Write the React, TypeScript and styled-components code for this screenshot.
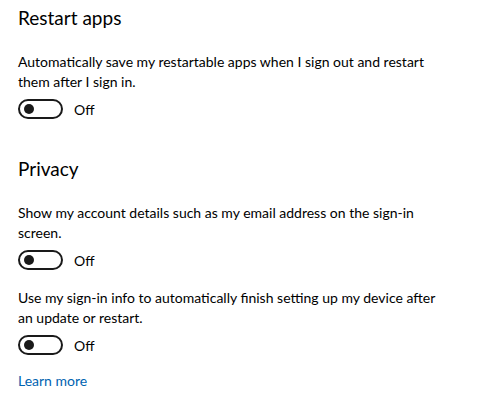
import * as React from "react"
import styled, { createGlobalStyle } from "styled-components"

const GlobalStyle = createGlobalStyle`
  body {
    margin: 0;
    background: #ffffff;
    font-family: Lato, "Noto Sans", sans-serif;
    color: #000000;
  }
`

type ToggleItem = { text: string }

const sections: { title: string; items: ToggleItem[] }[] = [
  {
    title: "Restart apps",
    items: [
      {
        text: "Automatically save my restartable apps when I sign out and restart them after I sign in.",
      },
    ],
  },
  {
    title: "Privacy",
    items: [
      { text: "Show my account details such as my email address on the sign-in screen." },
      {
        text: "Use my sign-in info to automatically finish setting up my device after an update or restart.",
      },
    ],
  },
]

const Toggle = () => (
  <ToggleRow>
    <Track>
      <Knob />
    </Track>
    <ToggleLabel>Off</ToggleLabel>
  </ToggleRow>
)

const App = () => {
  return (
    <Page>
      <GlobalStyle />
      {sections.map((s) => (
        <Section key={s.title}>
          <Title>{s.title}</Title>
          {s.items.map((it) => (
            <Setting key={it.text}>
              <Description>{it.text}</Description>
              <Toggle />
            </Setting>
          ))}
        </Section>
      ))}
      <LearnMore href="#">Learn more</LearnMore>
    </Page>
  )
}

export default App

const Page = styled.div`
  width: 493px;
  height: 416px;
  padding: 4px 18px 0 18px;
  box-sizing: border-box;
  display: flex;
  flex-direction: column;
  gap: 16px;
`

const Section = styled.div`
  display: flex;
  flex-direction: column;
  gap: 18px;

  & + & {
    margin-top: 20px;
  }
`

const Title = styled.h2`
  margin: 0 0 2px 0;
  font-size: 19px;
  font-weight: 400;
  line-height: 28px;
`

const Setting = styled.div`
  display: flex;
  flex-direction: column;
  gap: 7px;
`

const Description = styled.p`
  margin: 0;
  font-size: 14px;
  line-height: 20px;
  max-width: 428px;
`

const ToggleRow = styled.div`
  display: flex;
  align-items: center;
  gap: 11px;
`

const Track = styled.div`
  width: 45px;
  height: 20px;
  border: 2px solid #1a1a1a;
  border-radius: 10px;
  box-sizing: border-box;
  display: flex;
  align-items: center;
  padding-left: 4px;
`

const Knob = styled.div`
  width: 10px;
  height: 10px;
  border-radius: 50%;
  background: #1a1a1a;
`

const ToggleLabel = styled.span`
  font-size: 14px;
`

const LearnMore = styled.a`
  font-size: 14px;
  line-height: 20px;
  color: #0063b1;
  text-decoration: none;
`
